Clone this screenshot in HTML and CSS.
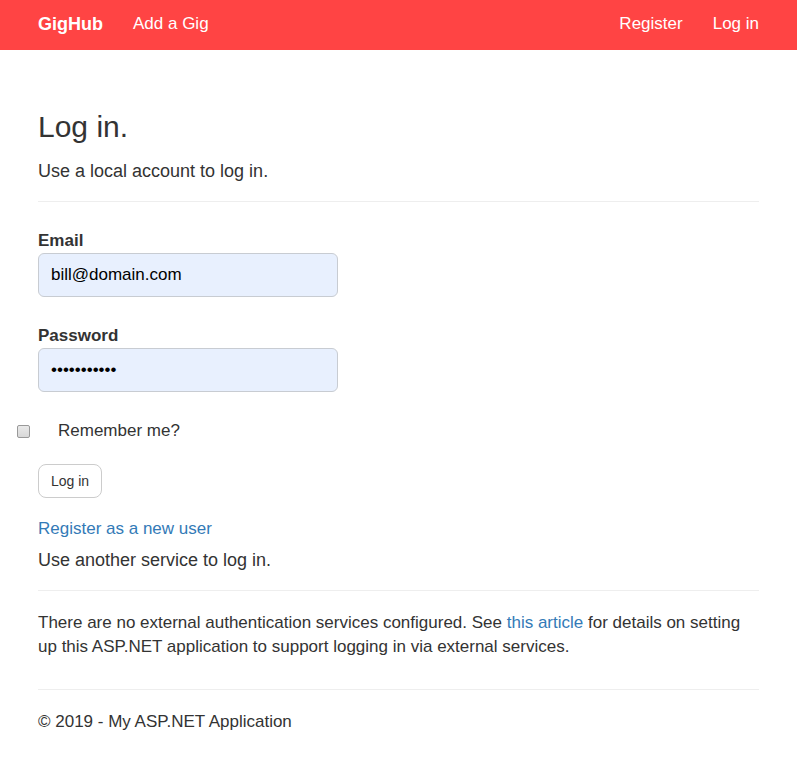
FILE: index.html
```html
<!DOCTYPE html>
<html lang="en">
<head>
<meta charset="utf-8">
<title>Log in - My ASP.NET Application</title>
<link rel="stylesheet" href="styles.css">
</head>
<body>
<nav class="navbar">
  <div class="container nav-inner">
    <a class="brand" href="#">GigHub</a>
    <a class="nav-link" href="#">Add a Gig</a>
    <div class="spacer"></div>
    <a class="nav-link" href="#">Register</a>
    <a class="nav-link" href="#">Log in</a>
  </div>
</nav>
<main class="container body-content">
  <h2 class="page-title">Log in.</h2>
  <h4 class="subtitle">Use a local account to log in.</h4>
  <hr class="rule">
  <form class="login-form">
    <div class="form-group">
      <label class="field-label" for="email">Email</label>
      <input class="form-control" id="email" type="text" value="bill@domain.com">
    </div>
    <div class="form-group">
      <label class="field-label" for="password">Password</label>
      <input class="form-control" id="password" type="password" value="secretpass1">
    </div>
    <div class="check-row">
      <input class="check" id="remember" type="checkbox">
      <label class="check-label" for="remember">Remember me?</label>
    </div>
    <div class="btn-row">
      <button class="btn" type="button">Log in</button>
    </div>
    <p class="register-link"><a href="#">Register as a new user</a></p>
  </form>
  <h4 class="subtitle service-title">Use another service to log in.</h4>
  <hr class="rule">
  <p class="info">There are no external authentication services configured. See <a href="#">this article</a> for details on setting up this ASP.NET application to support logging in via external services.</p>
  <hr class="rule footer-rule">
  <footer class="footer">
    <p>&copy; 2019 - My ASP.NET Application</p>
  </footer>
</main>
</body>
</html>
```
FILE: styles.css
```css
* { box-sizing: border-box; }
html, body { margin: 0; padding: 0; }
body {
  font-family: "Liberation Sans", Arial, Helvetica, sans-serif;
  font-size: 17px;
  line-height: 24px;
  color: #333;
  background: #fff;
}
a { color: #337ab7; text-decoration: none; }
.container { width: 721px; margin: 0 auto; }

.navbar { background: #ff4444; height: 50px; }
.nav-inner { display: flex; align-items: flex-start; height: 50px; padding-top: 14px; }
.brand { color: #fff; font-weight: bold; font-size: 18px; line-height: 20px; margin-right: 30px; }
.nav-link { color: #fff; font-size: 17px; line-height: 20px; }
.nav-inner .nav-link + .nav-link { margin-left: 30px; }
.spacer { flex: 1; }

.body-content { padding-top: 60px; }
.page-title { margin: 0; font-size: 30px; line-height: 33px; font-weight: normal; }
.subtitle { margin: 18px 0 0; font-size: 18px; line-height: 20px; font-weight: normal; }
.rule { margin: 20px 0; border: 0; border-top: 1px solid #eee; height: 0; }
.footer-rule { margin-top: 30px; }

.login-form { padding-top: 8px; }
.form-group { margin-bottom: 28px; }
.field-label { display: block; font-weight: bold; line-height: 22px; margin-bottom: 1px; }
.form-control {
  display: block;
  width: 300px;
  height: 44px;
  padding: 0 12px;
  font-family: inherit;
  font-size: 17px;
  color: #000;
  background: #e8f0fe;
  border: 1px solid #c8ccd2;
  border-radius: 6px;
  outline: none;
}
.check-row { display: flex; align-items: center; margin-top: -1px; height: 24px; }
.check {
  -webkit-appearance: none;
  appearance: none;
  width: 13px;
  height: 13px;
  margin: 0 28px 0 -21px;
  border: 1px solid #999;
  border-radius: 2px;
  background: linear-gradient(#e9e9e9, #d8d8d8);
}
.check-label { line-height: 24px; }
.btn-row { margin-top: 21px; }
.btn {
  font-family: inherit;
  font-size: 14px;
  line-height: 20px;
  padding: 6px 12px;
  color: #333;
  background: #fff;
  border: 1px solid #ccc;
  border-radius: 8px;
}
.register-link { margin: 19px 0 0; }
.service-title { margin-top: 9px; }
.info { margin: 0 0 10px; }
.footer p { margin: 0; }
```
